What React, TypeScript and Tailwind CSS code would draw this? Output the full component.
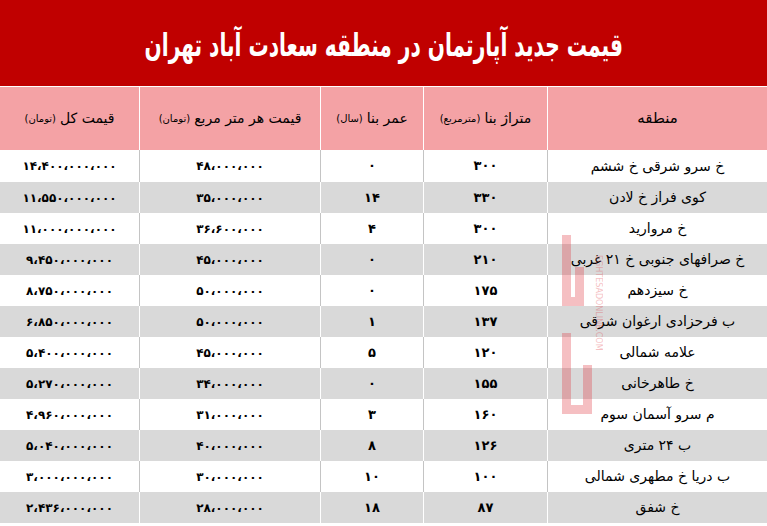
import React from "react";

const rows: [string, string, string, string, string][] = [
  ["خ سرو شرقی خ ششم", "۳۰۰", "۰", "۴۸،۰۰۰،۰۰۰", "۱۴،۴۰۰،۰۰۰،۰۰۰"],
  ["کوی فراز خ لادن", "۳۳۰", "۱۴", "۳۵،۰۰۰،۰۰۰", "۱۱،۵۵۰،۰۰۰،۰۰۰"],
  ["خ مروارید", "۳۰۰", "۴", "۳۶،۶۰۰،۰۰۰", "۱۱،۰۰۰،۰۰۰،۰۰۰"],
  ["خ صرافهای جنوبی خ ۲۱ غربی", "۲۱۰", "۰", "۴۵،۰۰۰،۰۰۰", "۹،۴۵۰،۰۰۰،۰۰۰"],
  ["خ سیزدهم", "۱۷۵", "۰", "۵۰،۰۰۰،۰۰۰", "۸،۷۵۰،۰۰۰،۰۰۰"],
  ["ب فرحزادی ارغوان شرقی", "۱۳۷", "۱", "۵۰،۰۰۰،۰۰۰", "۶،۸۵۰،۰۰۰،۰۰۰"],
  ["علامه شمالی", "۱۲۰", "۵", "۴۵،۰۰۰،۰۰۰", "۵،۴۰۰،۰۰۰،۰۰۰"],
  ["خ طاهرخانی", "۱۵۵", "۰", "۳۴،۰۰۰،۰۰۰", "۵،۲۷۰،۰۰۰،۰۰۰"],
  ["م سرو آسمان سوم", "۱۶۰", "۳", "۳۱،۰۰۰،۰۰۰", "۴،۹۶۰،۰۰۰،۰۰۰"],
  ["ب ۲۴ متری", "۱۲۶", "۸", "۴۰،۰۰۰،۰۰۰", "۵،۰۴۰،۰۰۰،۰۰۰"],
  ["ب دریا خ مطهری شمالی", "۱۰۰", "۱۰", "۳۰،۰۰۰،۰۰۰", "۳،۰۰۰،۰۰۰،۰۰۰"],
  ["خ شفق", "۸۷", "۱۸", "۲۸،۰۰۰،۰۰۰", "۲،۴۳۶،۰۰۰،۰۰۰"],
];

export default function App() {
  return (
    <div dir="rtl" className="relative w-[767px] h-[526px] bg-white overflow-hidden text-black font-['DejaVu_Sans',sans-serif]">
      <div className="h-[86px] bg-[#c00000] flex items-center justify-center">
        <h1 className="text-white text-[32px] font-bold leading-none pt-1 scale-x-[0.7] font-['DejaVu_Sans_Condensed','DejaVu_Sans',sans-serif] whitespace-nowrap">
          قیمت جدید آپارتمان در منطقه سعادت آباد تهران
        </h1>
      </div>
      <div className="h-px bg-white" />
      <div className="grid grid-cols-[219px_124px_103px_181px_140px] h-[63px] bg-[#f4a2a5]">
        <div className="flex items-center justify-center text-[15px]">منطقه</div>
        <div className="flex items-center justify-center gap-1 border-r border-white">
          <span className="text-[14px]">متراژ بنا</span>
          <span className="text-[10px]">(مترمربع)</span>
        </div>
        <div className="flex items-center justify-center gap-1 border-r border-white">
          <span className="text-[14px]">عمر بنا</span>
          <span className="text-[10px]">(سال)</span>
        </div>
        <div className="flex items-center justify-center gap-1 border-r border-white">
          <span className="text-[14px]">قیمت هر متر مربع</span>
          <span className="text-[10px]">(تومان)</span>
        </div>
        <div className="flex items-center justify-center gap-1 border-r border-white">
          <span className="text-[14px]">قیمت کل</span>
          <span className="text-[10px]">(تومان)</span>
        </div>
      </div>
      {rows.map((r, i) => {
        const grey = i % 2 === 1;
        const bc = grey ? "border-white" : "border-[#c4c4c4]";
        return (
          <div
            key={i}
            className={`grid grid-cols-[219px_124px_103px_181px_140px] ${i === 0 ? "h-[32px]" : "h-[31px]"} ${grey ? "bg-[#d9d9d9]" : "bg-white"}`}
          >
            <div className="flex items-center justify-center text-[14px] whitespace-nowrap">{r[0]}</div>
            <div className={`flex items-center justify-center text-[13px] font-bold border-r ${bc}`}>{r[1]}</div>
            <div className={`flex items-center justify-center text-[13px] font-bold border-r ${bc}`}>{r[2]}</div>
            <div className={`flex items-center justify-center text-[12px] font-bold border-r ${bc}`}>{r[3]}</div>
            <div className={`flex items-center justify-center text-[12px] font-bold border-r ${bc}`}>{r[4]}</div>
          </div>
        );
      })}
      <svg dir="ltr" className="absolute left-[548px] top-[225px] pointer-events-none opacity-30" width="60" height="225" viewBox="0 0 60 225">
        <rect x="14" y="10" width="9" height="62" fill="#e0303a" />
        <rect x="14" y="72" width="22" height="9" fill="#e0303a" />
        <rect x="27" y="42" width="9" height="32" fill="#e0303a" />
        <rect x="14" y="108" width="9" height="72" fill="#e0303a" />
        <rect x="14" y="180" width="30" height="9" fill="#e0303a" />
        <rect x="35" y="140" width="9" height="42" fill="#e0303a" />
        <text x="48" y="30" direction="ltr" textAnchor="start" fill="#e0303a" fontSize="8" fontFamily="DejaVu Sans, sans-serif" transform="rotate(90 48 30)">EGHTESADONLINE.COM</text>
      </svg>
    </div>
  );
}
